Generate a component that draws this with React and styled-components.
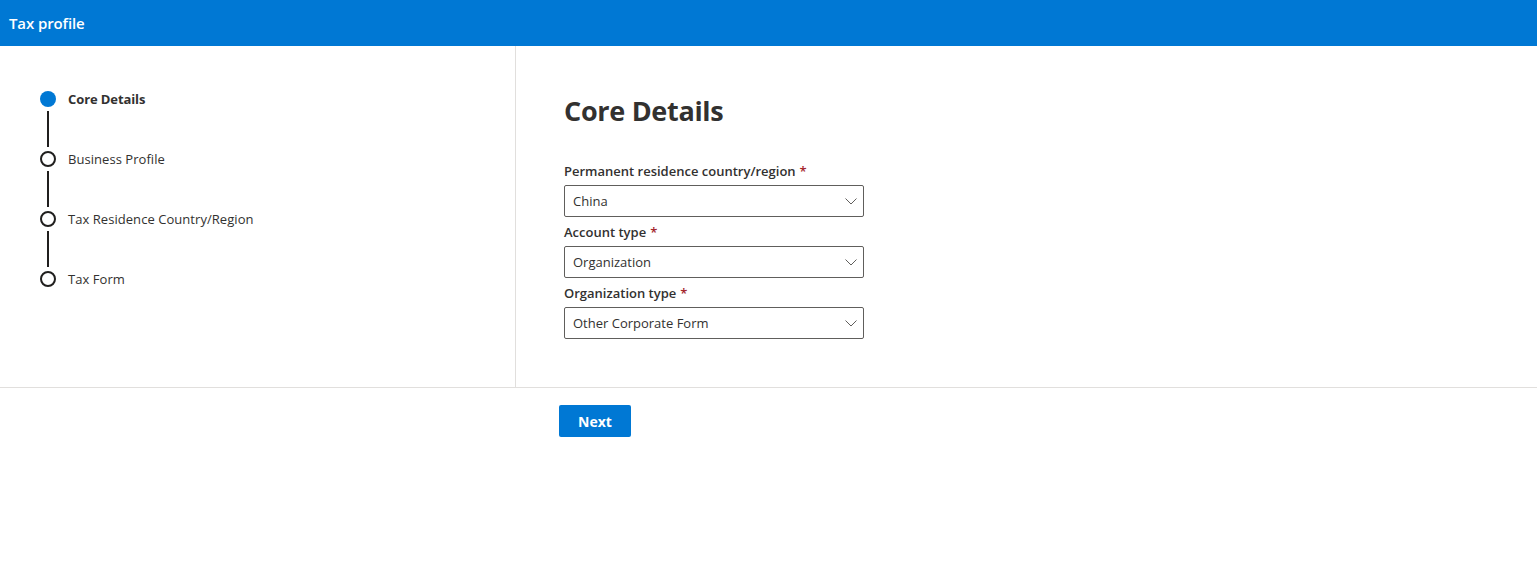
import React from "react";
import styled, { createGlobalStyle } from "styled-components";

const Global = createGlobalStyle`
  html, body { margin: 0; padding: 0; background: #fff; }
  body { font-family: "Open Sans", "Noto Sans", sans-serif; color: #323130; }
  * { box-sizing: border-box; }
`;

const Page = styled.div`
  width: 100%;
  min-height: 577px;
  background: #fff;
`;

const Header = styled.header`
  height: 46px;
  background: #0078d4;
  display: flex;
  align-items: center;
  padding-left: 9px;
`;

const HeaderTitle = styled.h1`
  margin: 0;
  font-size: 15px;
  font-weight: 600;
  color: #fff;
  letter-spacing: -0.1px;
`;

const Main = styled.div`
  display: flex;
  height: 342px;
  border-bottom: 1px solid #e1dfdd;
`;

const Sidebar = styled.nav`
  width: 516px;
  flex: none;
  border-right: 1px solid #e1dfdd;
  padding: 45px 0 0 40px;
`;

const StepList = styled.ol`
  list-style: none;
  margin: 0;
  padding: 0;
`;

const Step = styled.li`
  display: flex;
  align-items: flex-start;
  gap: 12px;
`;

const Rail = styled.div`
  display: flex;
  flex-direction: column;
  align-items: center;
  width: 16px;
`;

const Dot = styled.span`
  width: 16px;
  height: 16px;
  border-radius: 50%;
  background: ${(p) => (p.$active ? "#0078d4" : "#fff")};
  border: ${(p) => (p.$active ? "none" : "2px solid #201f1e")};
`;

const Connector = styled.span`
  width: 2px;
  height: 36px;
  margin: 4px 0;
  background: #201f1e;
`;

const StepLabel = styled.span`
  font-size: 13px;
  line-height: 16px;
  font-weight: ${(p) => (p.$active ? 700 : 400)};
  color: #323130;
  letter-spacing: ${(p) => (p.$active ? "-0.1px" : "0.05px")};
`;

const Content = styled.section`
  flex: 1;
  padding: 47px 0 0 48px;
`;

const Title = styled.h2`
  margin: 0 0 27px;
  font-size: 27px;
  line-height: 36px;
  font-weight: 700;
  color: #323130;
  letter-spacing: -0.3px;
`;

const Field = styled.div`
  width: 300px;
`;

const Label = styled.label`
  display: block;
  font-size: 13px;
  line-height: 19px;
  font-weight: 600;
  padding: 6px 0 4px;
  color: #323130;
  letter-spacing: 0;
`;

const Required = styled.span`
  color: #a4262c;
  margin-left: 4px;
`;

const Dropdown = styled.div`
  height: 32px;
  border: 1px solid #605e5c;
  border-radius: 2px;
  display: flex;
  align-items: center;
  justify-content: space-between;
  padding: 0 6px 0 8px;
  font-size: 13px;
  color: #323130;
  letter-spacing: 0;
`;

const Chevron = styled.svg`
  width: 12px;
  height: 12px;
  flex: none;
`;

const Footer = styled.div`
  padding: 17px 0 0 559px;
`;

const PrimaryButton = styled.button`
  width: 72px;
  height: 32px;
  border: none;
  border-radius: 2px;
  background: #0078d4;
  color: #fff;
  font-family: inherit;
  font-size: 14px;
  font-weight: 700;
  cursor: pointer;
`;

const steps = ["Core Details", "Business Profile", "Tax Residence Country/Region", "Tax Form"];

const fields = [
  { label: "Permanent residence country/region", value: "China" },
  { label: "Account type", value: "Organization" },
  { label: "Organization type", value: "Other Corporate Form" },
];

export default function App() {
  return (
    <Page>
      <Global />
      <Header>
        <HeaderTitle>Tax profile</HeaderTitle>
      </Header>
      <Main>
        <Sidebar>
          <StepList>
            {steps.map((s, i) => (
              <Step key={s}>
                <Rail>
                  <Dot $active={i === 0} />
                  {i < steps.length - 1 && <Connector />}
                </Rail>
                <StepLabel $active={i === 0}>{s}</StepLabel>
              </Step>
            ))}
          </StepList>
        </Sidebar>
        <Content>
          <Title>Core Details</Title>
          {fields.map((f) => (
            <Field key={f.label}>
              <Label>
                {f.label}
                <Required>*</Required>
              </Label>
              <Dropdown>
                <span>{f.value}</span>
                <Chevron viewBox="0 0 12 12">
                  <path d="M0.5 3.5 L6 9 L11.5 3.5" fill="none" stroke="#605e5c" strokeWidth="1" />
                </Chevron>
              </Dropdown>
            </Field>
          ))}
        </Content>
      </Main>
      <Footer>
        <PrimaryButton>Next</PrimaryButton>
      </Footer>
    </Page>
  );
}
